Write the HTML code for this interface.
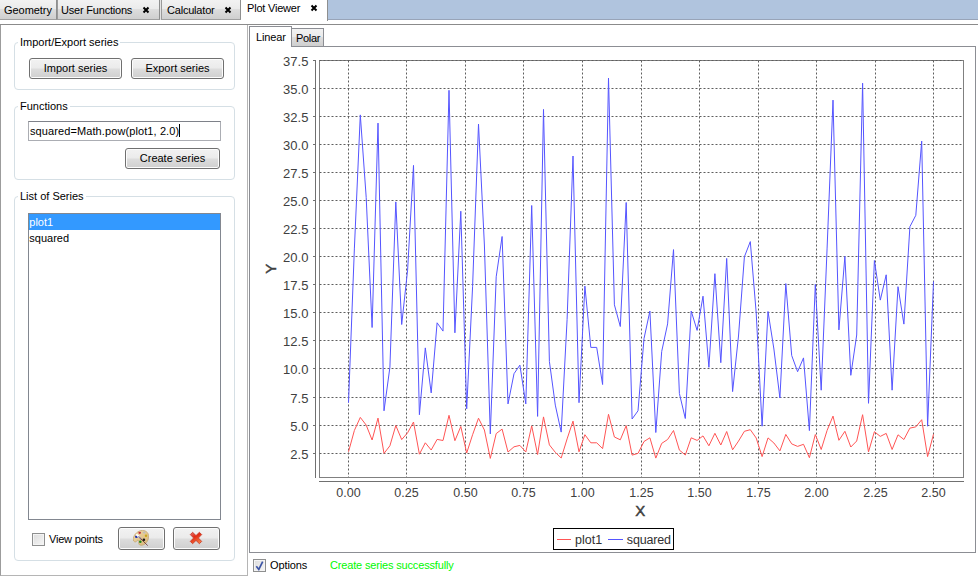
<!DOCTYPE html>
<html>
<head>
<meta charset="utf-8">
<title>Plot Viewer</title>
<style>
html,body{margin:0;padding:0;}
body{width:978px;height:579px;position:relative;overflow:hidden;background:#fff;
  font-family:"Liberation Sans",sans-serif;font-size:11px;color:#000;}
.abs{position:absolute;box-sizing:border-box;}
/* top tab strip */
#strip{left:0;top:0;width:978px;height:20px;background:#b0c4de;border-bottom:1px solid #98a4b8;}
#stripl{left:0;top:0;width:328px;height:20px;background:#e4e4e4;}
.tab{top:0;height:20px;border-right:1px solid #8e8f8f;border-left:1px solid #9a9a9a;border-bottom:1px solid #a0a0a0;
  background:linear-gradient(#f2f2f2 0,#ebebeb 45%,#dddddd 50%,#cfcfcf 100%);white-space:nowrap;}
.tab span{position:absolute;top:4px;line-height:13px;letter-spacing:-0.2px;}
.tab.sel{background:#fff;border-left:none;border-right:1px solid #8e8f8f;border-bottom:none;height:21px;}
.tab.sel span{top:2px;}
.x{position:absolute;width:8px;height:8px;}
#hline{left:0;top:24px;width:978px;height:1px;background:#8b8b8b;}
#wband{left:0;top:20px;width:978px;height:4px;background:#fff;}
/* left panel */
#left{left:0;top:25px;width:248px;height:551px;border:1px solid #b5b5b5;border-left-color:#9c9c9c;border-top:none;background:#fff;}
.grp{border:1px solid #d5dfe5;border-radius:4px;}
.gt{background:#fff;padding:0 2px;line-height:13px;white-space:nowrap;}
.btn{border:1px solid #707070;border-radius:3px;text-align:center;line-height:19px;white-space:nowrap;
  background:linear-gradient(#f2f2f2 0,#ebebeb 48%,#dddddd 52%,#cfcfcf 100%);box-shadow:inset 0 0 0 1px #fcfcfc;}
#tf{left:28px;top:121px;width:193px;height:20px;border:1px solid #abadb3;border-top-color:#7e8189;background:#fff;line-height:18px;padding-left:1px;white-space:nowrap;letter-spacing:0.1px;}
#list{left:28px;top:213px;width:193px;height:307px;border:1px solid #828790;background:#fff;}
.li{position:absolute;left:0;width:191px;height:16px;line-height:16px;padding-left:0.300px;box-sizing:border-box;}
.li.sel{background:#3399ff;color:#fff;}
.cb{width:13px;height:13px;border:1px solid #8e8f8f;background:linear-gradient(135deg,#dcdcdc,#f6f6f6);box-shadow:inset 0 0 0 1px #f4f4f4;}
/* right */
#pane{left:249px;top:46px;width:727px;height:507px;border:1px solid #8c8e94;background:#fff;}
.stab{border:1px solid #8c8e94;border-bottom:none;white-space:nowrap;}
.chart{position:absolute;left:0;top:0;}
.tl text{font-family:"Liberation Sans",sans-serif;font-size:12.5px;fill:#404040;}
.tly text{font-size:13px;}
.al{font-family:"Liberation Sans",sans-serif;font-size:15px;fill:#404040;stroke:#404040;stroke-width:.45px;}
.lg{font-family:"Liberation Sans",sans-serif;font-size:12.5px;fill:#303030;}
</style>
</head>
<body>
<div id="strip" class="abs"></div>
<div id="stripl" class="abs"></div>
<div id="wband" class="abs"></div>
<div class="abs tab" style="left:0;width:57px;border-left:none;"><span style="left:4px;letter-spacing:-0.05px;">Geometry</span></div>
<div class="abs tab" style="left:57px;width:103px;"><span style="left:3px;">User Functions</span>
  <svg class="x" style="left:84px;top:6px;" viewBox="0 0 8 8"><path d="M1.500 1.500L6.500 6.500M6.500 1.500L1.500 6.500" stroke="#000" stroke-width="2" fill="none"/></svg></div>
<div class="abs tab" style="left:161px;width:80px;"><span style="left:5px;">Calculator</span>
  <svg class="x" style="left:62px;top:6px;" viewBox="0 0 8 8"><path d="M1.500 1.500L6.500 6.500M6.500 1.500L1.500 6.500" stroke="#000" stroke-width="2" fill="none"/></svg></div>
<div class="abs tab sel" style="left:241px;width:87px;"><span style="left:6px;">Plot Viewer</span>
  <svg class="x" style="left:69px;top:4px;" viewBox="0 0 8 8"><path d="M1.500 1.500L6.500 6.500M6.500 1.500L1.500 6.500" stroke="#000" stroke-width="2" fill="none"/></svg></div>
<div id="hline" class="abs"></div>

<div id="left" class="abs"></div>
<!-- group 1 -->
<div class="abs grp" style="left:14px;top:42px;width:221px;height:48px;"></div>
<div class="abs gt" style="left:18px;top:36px;">Import/Export series</div>
<div class="abs btn" style="left:29px;top:58px;width:93px;height:21px;">Import series</div>
<div class="abs btn" style="left:131px;top:58px;width:93px;height:21px;">Export series</div>
<!-- group 2 -->
<div class="abs grp" style="left:14px;top:106px;width:221px;height:74px;"></div>
<div class="abs gt" style="left:18px;top:100px;">Functions</div>
<div id="tf" class="abs">squared=Math.pow(plot1, 2.0)<span style="display:inline-block;width:1px;height:13px;background:#000;vertical-align:-2px;"></span></div>
<div class="abs btn" style="left:125px;top:148px;width:95px;height:21px;">Create series</div>
<!-- group 3 -->
<div class="abs grp" style="left:14px;top:196px;width:221px;height:365px;"></div>
<div class="abs gt" style="left:18px;top:190px;">List of Series</div>
<div id="list" class="abs">
  <div class="li sel" style="top:0;">plot1</div>
  <div class="li" style="top:16px;">squared</div>
</div>
<div class="abs cb" style="left:32px;top:533px;"></div>
<div class="abs" style="left:49px;top:533px;line-height:13px;white-space:nowrap;letter-spacing:-0.2px;">View points</div>
<div class="abs btn" style="left:118px;top:527px;width:47px;height:23px;">
  <svg width="16" height="16" viewBox="0 0 16 16" style="position:absolute;left:14px;top:2px;">
    <defs><linearGradient id="pal" x1="0" y1="0" x2="1" y2="1"><stop offset="0" stop-color="#f0d9a8"/><stop offset="1" stop-color="#d9b678"/></linearGradient></defs>
    <path d="M9.500 .4C13.500 .4 16 3.500 15.700 7 15.400 11 12 15.500 8 15.300 6 15.200 5.400 13.600 5.800 12.100 6.100 11 5.500 10 4.500 10.300 3.500 10.600 3.800 11.800 2.500 11.900 1 12 0 10.500 .3 8.500 .8 4.500 5 .4 9.500 .4z" fill="url(#pal)" stroke="#c3a066" stroke-width=".7"/>
    <ellipse cx="6.700" cy="2.800" rx="1.300" ry="1.100" fill="#c42b3a"/>
    <ellipse cx="11.200" cy="2.600" rx="1.300" ry="1" fill="#b9bcc2"/>
    <ellipse cx="13" cy="5.800" rx="1.200" ry="1.200" fill="#c9a81a"/>
    <ellipse cx="10.900" cy="9.700" rx="1.300" ry="1.200" fill="#151515"/>
    <ellipse cx="7.300" cy="11.800" rx="1.300" ry="1.200" fill="#1e8a1e"/>
    <ellipse cx="3.400" cy="6.800" rx="1.400" ry="1.200" fill="#1c2fb0"/>
    <path d="M3.800 4.800L6 6.700" stroke="#fff" stroke-width="1.800" stroke-linecap="round"/>
    <path d="M5.800 6.800L8 9" stroke="#8a7f9a" stroke-width="1.300" stroke-linecap="round"/>
    <path d="M8 9L14.400 15.300" stroke="#6b3a3a" stroke-width=".9" stroke-linecap="round"/>
  </svg>
</div>
<div class="abs btn" style="left:173px;top:527px;width:47px;height:23px;">
  <svg width="14" height="14" viewBox="0 0 14 14" style="position:absolute;left:15px;top:3px;">
    <defs><linearGradient id="rx" x1="0" y1="0" x2="0.600" y2="1"><stop offset="0" stop-color="#e87878"/><stop offset=".45" stop-color="#e22a14"/><stop offset="1" stop-color="#f6763e"/></linearGradient></defs>
    <path d="M1.300 3.600L3.600 1.300 7 4.600 10.400 1.300 12.700 3.600 9.400 7 12.700 10.400 10.400 12.700 7 9.400 3.600 12.700 1.300 10.400 4.600 7z" fill="url(#rx)" stroke="#c8402e" stroke-width=".9" stroke-linejoin="round"/>
  </svg>
</div>

<!-- right side -->
<div id="pane" class="abs"></div>
<div class="abs stab" style="left:249px;top:26px;width:43px;height:21px;background:#fff;"><span style="position:absolute;left:6px;top:4px;line-height:13px;letter-spacing:-0.15px;">Linear</span></div>
<div class="abs stab" style="left:291px;top:28px;width:33px;height:18px;background:linear-gradient(#f2f2f2 0,#ebebeb 45%,#dddddd 50%,#cfcfcf 100%);"><span style="position:absolute;left:4px;top:3px;line-height:13px;letter-spacing:-0.3px;">Polar</span></div>
<svg class="chart" width="978" height="579" viewBox="0 0 978 579">
<rect x="319.5" y="60.5" width="644" height="417" fill="#fff" stroke="#808080" stroke-width="1"/>
<g stroke="#5e5e5e" stroke-width="1" stroke-dasharray="2,2"><line x1="319.5" x2="963" y1="453.5" y2="453.5"/><line x1="319.5" x2="963" y1="425.5" y2="425.5"/><line x1="319.5" x2="963" y1="397.5" y2="397.5"/><line x1="319.5" x2="963" y1="368.5" y2="368.5"/><line x1="319.5" x2="963" y1="340.5" y2="340.5"/><line x1="319.5" x2="963" y1="312.5" y2="312.5"/><line x1="319.5" x2="963" y1="284.5" y2="284.5"/><line x1="319.5" x2="963" y1="256.5" y2="256.5"/><line x1="319.5" x2="963" y1="228.5" y2="228.5"/><line x1="319.5" x2="963" y1="200.5" y2="200.5"/><line x1="319.5" x2="963" y1="172.5" y2="172.5"/><line x1="319.5" x2="963" y1="144.5" y2="144.5"/><line x1="319.5" x2="963" y1="116.5" y2="116.5"/><line x1="319.5" x2="963" y1="88.5" y2="88.5"/><line x1="319.5" x2="963" y1="60.5" y2="60.5"/><line y1="60.5" y2="477" x1="348.5" x2="348.5"/><line y1="60.5" y2="477" x1="406.5" x2="406.5"/><line y1="60.5" y2="477" x1="465.5" x2="465.5"/><line y1="60.5" y2="477" x1="523.5" x2="523.5"/><line y1="60.5" y2="477" x1="582.5" x2="582.5"/><line y1="60.5" y2="477" x1="641.5" x2="641.5"/><line y1="60.5" y2="477" x1="699.5" x2="699.5"/><line y1="60.5" y2="477" x1="758.5" x2="758.5"/><line y1="60.5" y2="477" x1="816.5" x2="816.5"/><line y1="60.5" y2="477" x1="875.5" x2="875.5"/><line y1="60.5" y2="477" x1="933.5" x2="933.5"/></g>
<g stroke="#707070" stroke-width="1" shape-rendering="crispEdges">
<line x1="315.5" x2="315.5" y1="60" y2="478"/>
<line x1="319" x2="964" y1="481.5" y2="481.5"/>
<line x1="313" x2="315" y1="453.5" y2="453.5"/>
<line x1="313" x2="315" y1="425.5" y2="425.5"/>
<line x1="313" x2="315" y1="397.5" y2="397.5"/>
<line x1="313" x2="315" y1="368.5" y2="368.5"/>
<line x1="313" x2="315" y1="340.5" y2="340.5"/>
<line x1="313" x2="315" y1="312.5" y2="312.5"/>
<line x1="313" x2="315" y1="284.5" y2="284.5"/>
<line x1="313" x2="315" y1="256.5" y2="256.5"/>
<line x1="313" x2="315" y1="228.5" y2="228.5"/>
<line x1="313" x2="315" y1="200.5" y2="200.5"/>
<line x1="313" x2="315" y1="172.5" y2="172.5"/>
<line x1="313" x2="315" y1="144.5" y2="144.5"/>
<line x1="313" x2="315" y1="116.5" y2="116.5"/>
<line x1="313" x2="315" y1="88.5" y2="88.5"/>
<line x1="313" x2="315" y1="60.5" y2="60.5"/>
<line y1="482" y2="484" x1="348.5" x2="348.5"/>
<line y1="482" y2="484" x1="406.5" x2="406.5"/>
<line y1="482" y2="484" x1="465.5" x2="465.5"/>
<line y1="482" y2="484" x1="523.5" x2="523.5"/>
<line y1="482" y2="484" x1="582.5" x2="582.5"/>
<line y1="482" y2="484" x1="641.5" x2="641.5"/>
<line y1="482" y2="484" x1="699.5" x2="699.5"/>
<line y1="482" y2="484" x1="758.5" x2="758.5"/>
<line y1="482" y2="484" x1="816.5" x2="816.5"/>
<line y1="482" y2="484" x1="875.5" x2="875.5"/>
<line y1="482" y2="484" x1="933.5" x2="933.5"/>
</g>
<g class="tl tly" text-anchor="end">
<text x="308.4" y="458.8">2.5</text>
<text x="308.4" y="430.8">5.0</text>
<text x="308.4" y="402.8">7.5</text>
<text x="308.4" y="373.8">10.0</text>
<text x="308.4" y="345.8">12.5</text>
<text x="308.4" y="317.8">15.0</text>
<text x="308.4" y="289.8">17.5</text>
<text x="308.4" y="261.8">20.0</text>
<text x="308.4" y="233.8">22.5</text>
<text x="308.4" y="205.8">25.0</text>
<text x="308.4" y="177.8">27.5</text>
<text x="308.4" y="149.8">30.0</text>
<text x="308.4" y="121.8">32.5</text>
<text x="308.4" y="93.8">35.0</text>
<text x="308.4" y="65.8">37.5</text>
</g>
<g class="tl" text-anchor="middle">
<text x="348.5" y="497">0.00</text>
<text x="406.5" y="497">0.25</text>
<text x="465.5" y="497">0.50</text>
<text x="523.5" y="497">0.75</text>
<text x="582.5" y="497">1.00</text>
<text x="641.5" y="497">1.25</text>
<text x="699.5" y="497">1.50</text>
<text x="758.5" y="497">1.75</text>
<text x="816.5" y="497">2.00</text>
<text x="875.5" y="497">2.25</text>
<text x="933.5" y="497">2.50</text>
</g>
<text class="al" x="640.3" y="516.3" text-anchor="middle">X</text>
<text class="al" transform="translate(276.3,268.8) rotate(-90)" text-anchor="middle">Y</text>
<polyline fill="none" stroke="#5555ff" stroke-width="1" stroke-linejoin="miter" stroke-miterlimit="30" points="348.5,402.7 354.4,248.1 360.3,114.9 366.2,197.4 372.1,327.5 378.0,123.1 384.0,410.8 389.9,367.3 395.8,201.9 401.7,324.5 407.6,270.1 413.5,165.4 419.4,414.7 425.3,347.9 431.2,392.9 437.1,322.8 443.0,331.1 449.0,90.3 454.9,332.8 460.8,211.2 466.7,408.8 472.6,286.3 478.5,124.1 484.4,245.0 490.3,433.9 496.2,276.8 502.1,236.5 508.0,403.9 514.0,373.7 519.9,365.1 525.8,403.9 531.7,205.5 537.6,416.4 543.5,109.4 549.4,361.5 555.3,405.1 561.2,432.1 567.1,319.4 573.0,156.0 579.0,402.7 584.9,286.1 590.8,347.4 596.7,347.4 602.6,384.5 608.5,78.1 614.4,304.8 620.3,326.5 626.2,202.5 632.1,419.0 638.0,410.8 644.0,338.6 649.9,311.0 655.8,432.5 661.7,351.5 667.6,323.9 673.5,249.6 679.4,393.5 685.3,418.5 691.2,311.0 697.1,330.4 703.0,296.2 708.9,367.3 714.9,273.7 720.8,362.7 726.7,258.4 732.6,391.6 738.5,336.0 744.4,256.8 750.3,241.6 756.2,312.8 762.1,426.2 768.0,311.5 773.9,349.0 779.9,398.0 785.8,283.6 791.7,355.5 797.6,371.7 803.5,357.9 809.4,430.6 815.3,284.4 821.2,390.2 827.1,248.1 833.0,100.1 838.9,329.9 844.9,256.4 850.8,375.3 856.7,335.0 862.6,83.2 868.5,403.3 874.4,260.5 880.3,300.1 886.2,274.8 892.1,390.2 898.0,286.7 903.9,324.1 909.9,226.7 915.8,215.3 921.7,141.1 927.6,426.2 933.5,281.5"/>
<polyline fill="none" stroke="#ff5555" stroke-width="1" stroke-linejoin="miter" stroke-miterlimit="30" points="348.5,451.8 354.4,430.4 360.3,417.4 366.2,425.1 372.1,440.0 378.0,418.1 384.0,453.4 389.9,445.8 395.8,425.5 401.7,439.6 407.6,432.8 413.5,422.0 419.4,454.2 425.3,442.8 431.2,450.0 437.1,439.4 443.0,440.5 449.0,415.3 454.9,440.7 460.8,426.5 466.7,453.0 472.6,434.7 478.5,418.2 484.4,430.0 490.3,458.4 496.2,433.6 502.1,429.1 508.0,452.0 514.0,446.8 519.9,445.4 525.8,452.0 531.7,425.9 537.6,454.5 543.5,416.9 549.4,444.9 555.3,452.3 561.2,458.0 567.1,438.9 573.0,421.1 579.0,451.8 584.9,434.7 590.8,442.8 596.7,442.8 602.6,448.6 608.5,414.3 614.4,437.0 620.3,439.8 626.2,425.6 632.1,455.1 638.0,453.4 644.0,441.5 649.9,437.8 655.8,458.1 661.7,443.4 667.6,439.5 673.5,430.5 679.4,450.1 685.3,455.0 691.2,437.8 697.1,440.4 703.0,435.9 708.9,445.8 714.9,433.3 720.8,445.0 726.7,431.5 732.6,449.8 738.5,441.1 744.4,431.3 750.3,429.7 756.2,438.0 762.1,456.6 768.0,437.9 773.9,443.0 779.9,450.9 785.8,434.4 791.7,443.9 797.6,446.4 803.5,444.3 809.4,457.7 815.3,434.5 821.2,449.5 827.1,430.4 833.0,416.1 838.9,440.3 844.9,431.3 850.8,447.0 856.7,441.0 862.6,414.7 868.5,451.9 874.4,431.7 880.3,436.4 886.2,433.4 892.1,449.5 898.0,434.8 903.9,439.5 909.9,428.1 915.8,426.9 921.7,419.7 927.6,456.6 933.5,434.2"/>
<rect x="553.5" y="528.5" width="120" height="21" fill="#fff" stroke="#000" stroke-width="1" shape-rendering="crispEdges"/>
<line x1="557" x2="571" y1="539.5" y2="539.5" stroke="#ff5555" stroke-width="1"/>
<line x1="608" x2="623" y1="539.5" y2="539.5" stroke="#5555ff" stroke-width="1"/>
<text class="lg" x="575" y="543.5">plot1</text>
<text class="lg" x="626.8" y="543.5" letter-spacing="-0.15">squared</text>
</svg>
<div class="abs cb" style="left:253px;top:559px;">
  <svg width="11" height="11" viewBox="0 0 11 11" style="position:absolute;left:0;top:0;"><path d="M2.300 6.200L4.800 9.400 8.700 1.600" stroke="#3d55a6" stroke-width="1.700" fill="none"/></svg>
</div>
<div class="abs" style="left:270px;top:559px;line-height:13px;letter-spacing:-0.1px;">Options</div>
<div class="abs" style="left:330px;top:559px;line-height:13px;color:#00f800;white-space:nowrap;letter-spacing:-0.16px;">Create series successfully</div>
</body>
</html>
